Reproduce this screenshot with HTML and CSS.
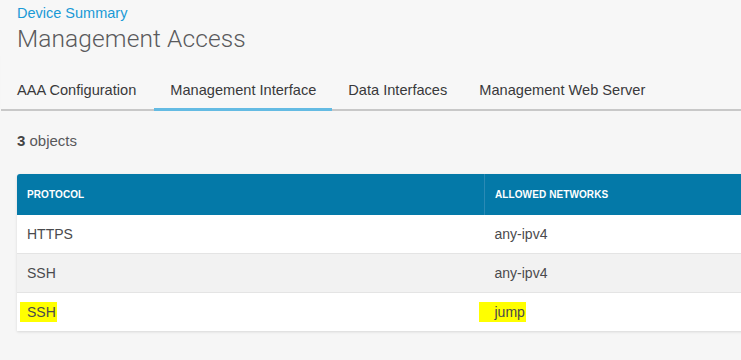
FILE: index.html
```html
<!DOCTYPE html>
<html lang="en">
<head>
  <meta charset="UTF-8" />
  <title>Management Access</title>
  <link rel="stylesheet" href="styles.css">
</head>
<body>
  <div class="page-head">
    <a class="crumb" href="#">Device Summary</a>
    <h1>Management Access</h1>
  </div>

  <nav class="tabs">
    <a class="tab" href="#">AAA Configuration</a>
    <a class="tab active" href="#">Management Interface</a>
    <a class="tab" href="#">Data Interfaces</a>
    <a class="tab" href="#">Management Web Server</a>
  </nav>

  <div class="content">
    <div class="count"><strong>3</strong> objects</div>

    <table class="grid">
      <thead>
        <tr>
          <th class="col-proto">PROTOCOL</th>
          <th>ALLOWED NETWORKS</th>
        </tr>
      </thead>
      <tbody>
        <tr><td>HTTPS</td><td>any-ipv4</td></tr>
        <tr class="alt"><td>SSH</td><td>any-ipv4</td></tr>
        <tr><td><span class="mark mark-a">SSH</span></td><td><span class="mark mark-b">jump</span></td></tr>
      </tbody>
    </table>
  </div>
</body>
</html>
```

FILE: styles.css
```css
html, body { margin: 0; background: #f6f6f6; overflow: hidden; }
body { font-family: "Liberation Sans", Arial, sans-serif; color: #58585b; width: 741px; height: 360px; }

.page-head { padding: 4px 0 0 17px; background: #f7f7f7; }
.crumb { display: block; color: #1a9ad6; text-decoration: none; font-size: 14.5px; line-height: 18px; }
h1 { margin: 0; font-family: Roboto, "Liberation Sans", sans-serif; font-weight: 300; font-size: 24.5px; line-height: 34px; color: #5a5a5c; letter-spacing: 0.1px; }

.tabs { display: flex; margin-left: 1px; padding-top: 26px; border-bottom: 2px solid #c8c8c8; background: #f7f7f7; }
.tab { padding: 0 16px 9px; font-size: 14.6px; line-height: 17px; color: #39393b; text-decoration: none; border-bottom: 3px solid transparent; margin-bottom: -2px; }
.tab:first-child { padding-right: 18px; }
.tab.active { border-bottom-color: #64bbe3; }

.content { padding: 21px 0 0 17px; }
.count { font-size: 15px; line-height: 18px; color: #58585b; }
.count strong { color: #444; }

.grid { margin-top: 24px; width: 760px; border-collapse: collapse; background: #fff; border-radius: 3px 0 0 0; overflow: hidden; box-shadow: 0 1px 3px rgba(0,0,0,0.12); }
.grid th { background: #0479a8; color: #fff; font-size: 10px; font-weight: bold; text-align: left; height: 41px; padding: 0 10px; letter-spacing: 0.1px; }
.grid th.col-proto { width: 447px; border-right: 1px solid #2a8ab5; }
.grid td { font-size: 14px; height: 38px; padding: 0 10px; border-top: 1px solid #e4e4e4; color: #4a4a4d; }
.grid tbody tr:first-child td { border-top: none; }
.grid tr.alt td { background: #f2f2f2; }

.mark { background: #ffff00; padding: 2px 1px 2px 0; }
.mark-a { margin-left: -7px; padding-left: 7px; }
.mark-b { margin-left: -16px; padding-left: 16px; }
```
